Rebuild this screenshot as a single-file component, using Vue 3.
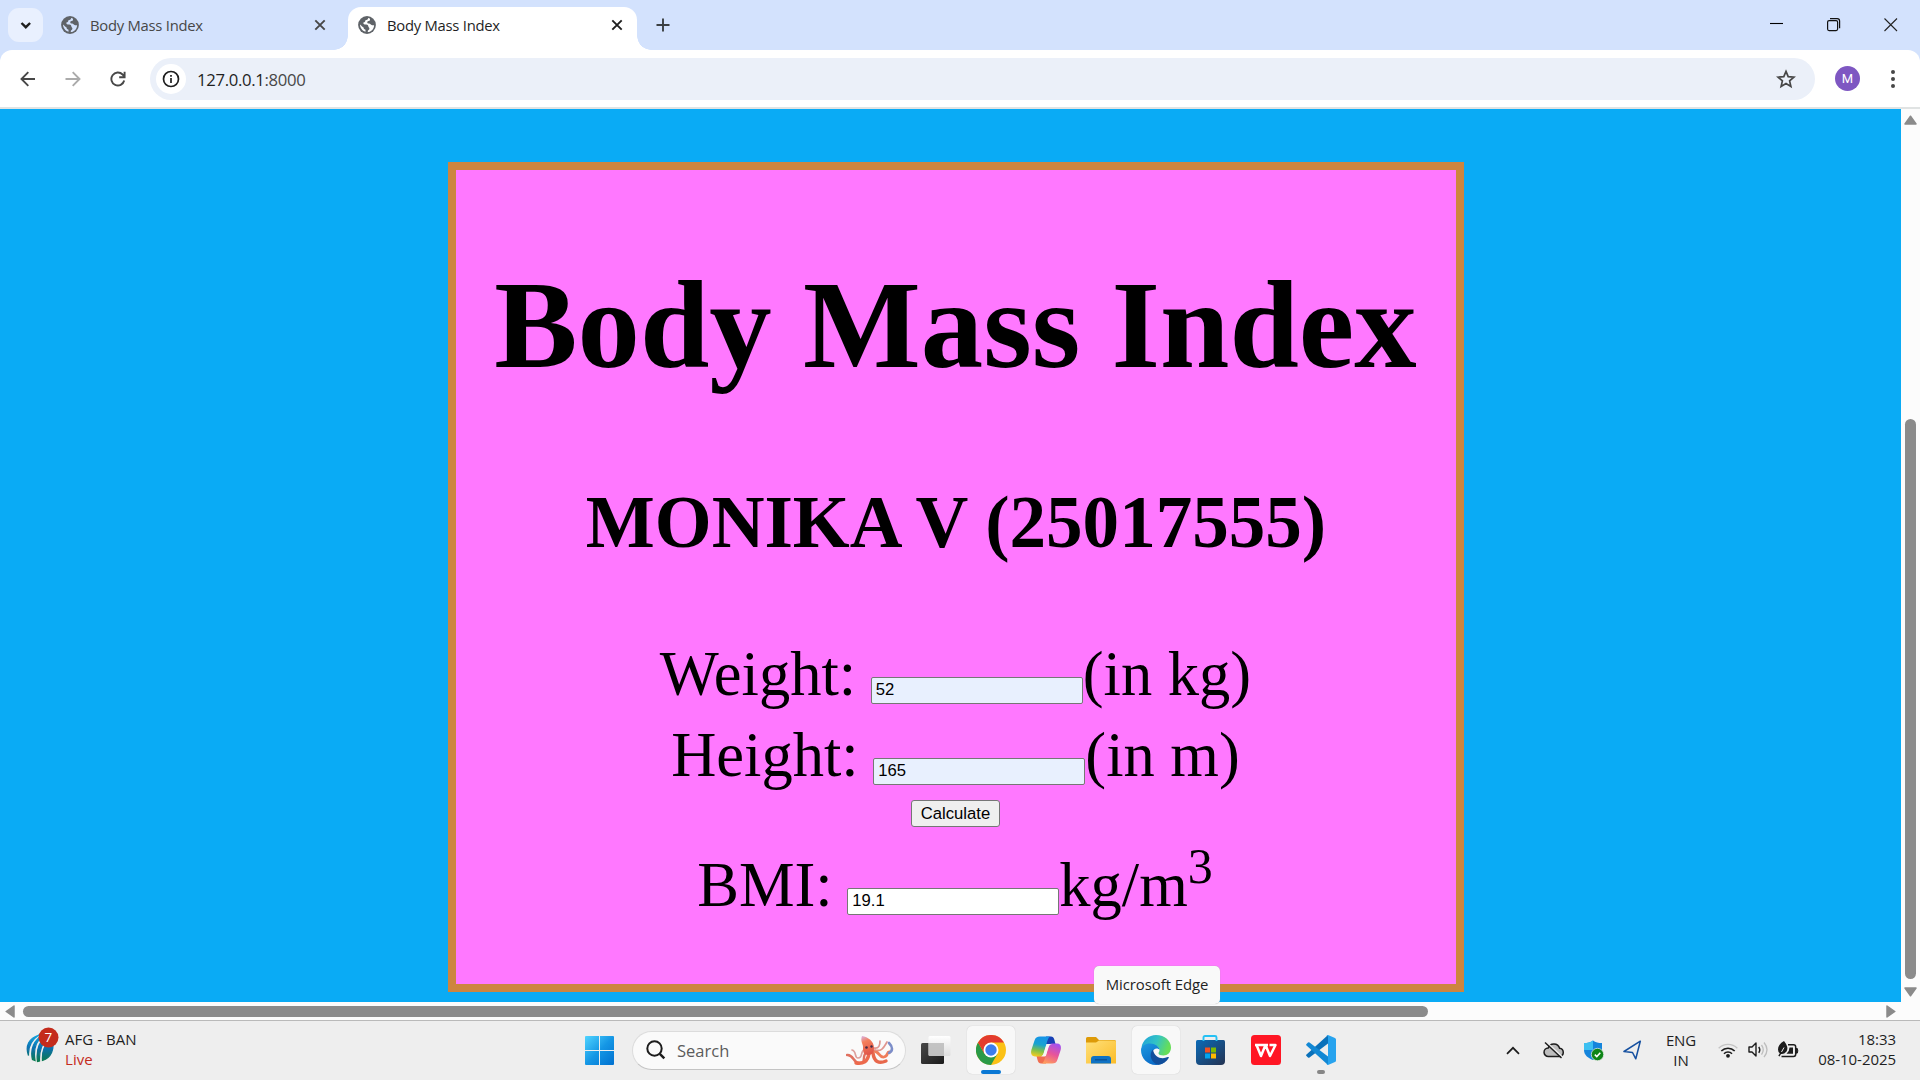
<script setup>
import { ref } from 'vue'

const tabs = [
  { title: 'Body Mass Index', active: false },
  { title: 'Body Mass Index', active: true },
]
const weight = ref('52')
const height = ref('165')
const bmi = ref('19.1')
</script>

<template>
  <div class="screen">
    <header class="tabstrip">
      <div class="tab-search">
        <svg width="35" height="34" viewBox="0 0 35 34"><path d="M13.500 15l4.300 4.200 4.300-4.200" fill="none" stroke="#1f1f1f" stroke-width="2.400" /></svg>
      </div>
      <div v-for="(t, i) in tabs" :key="i" class="tab" :class="{ active: t.active }">
        <svg class="globe" width="18" height="18" viewBox="0 0 18 18">
          <circle cx="9" cy="9" r="8.9" fill="#5f6368" />
          <path d="M10.2 2.1C9.9 3.6 8.8 4.2 7.4 4.3c-.2 1.300-.5 2.100-2 2.300-.2 1 .1 1.800 1.500 1.900 1.900.1 3.300.1 3.400 1.700.1 1.300 1.200 1.200 1.100 2.500-.1 1.300-1.500 1.200-1.600 2.300v1.100c3.500-.4 6.300-3.300 6.300-6.900h-2c-1.500 0-1.700-1.500-3-1.600-1.200-.1-2-.6-1.800-1.700.2-1.200 2.300-.5 2.700-1.700.2-.7 0-1.500-.5-2z" :fill="t.active ? '#fff' : '#d3e2fd'" />
          <path d="M2 8.600c.1 3.500 2.300 6.300 5.500 7.100v-2c-1.400-.2-1.900-1-1.900-2.100C4.600 11 3.200 9.700 2 8.600z" :fill="t.active ? '#fff' : '#d3e2fd'" />
        </svg>
        <span class="tab-title">{{ t.title }}</span>
        <svg class="tab-close" width="12" height="12" viewBox="0 0 12 12"><path d="M1.300 1.300l9.400 9.400M10.700 1.300l-9.400 9.400" stroke-width="1.900" stroke="currentColor" /></svg>
      </div>
      <svg class="plus" width="14" height="14" viewBox="0 0 14 14"><path d="M7 .5v13M.5 7h13" stroke="#3c4043" stroke-width="1.900" /></svg>
      <div class="win">
        <svg width="14" height="14" viewBox="0 0 14 14"><path d="M0 5.500h13" stroke="#000" stroke-width="1.100" /></svg>
        <svg width="14" height="14" viewBox="0 0 14 14"><rect x=".6" y="2.600" width="10" height="10" rx="1.500" fill="none" stroke="#111" stroke-width="1.200" /><path d="M3 .6h7.200q2.400 0 2.400 2.400v7.200" fill="none" stroke="#111" stroke-width="1.200" /></svg>
        <svg width="14" height="14" viewBox="0 0 14 14"><path d="M.5.5l12.500 12.500M13 .5L.5 13" stroke="#222" stroke-width="1.100" /></svg>
      </div>
    </header>

    <nav class="toolbar">
      <svg class="nav-ic" width="16" height="16" viewBox="0 0 16 16"><path d="M15 8H2M8.300 1.200L1.500 8l6.800 6.800" fill="none" stroke="#474747" stroke-width="1.900" /></svg>
      <svg class="nav-ic fwd" width="16" height="16" viewBox="0 0 16 16"><path d="M.5 8H14M7.700 1.200L14.500 8l-6.800 6.800" fill="none" stroke="#ababab" stroke-width="1.900" /></svg>
      <svg class="nav-ic rel" width="16" height="16" viewBox="0 0 16 16"><path d="M14.200 9.500A6.500 6.500 0 1 1 12.600 3.500l1.900 2M14.600.8v5.400H9.200" fill="none" stroke="#474747" stroke-width="1.900" /></svg>
      <div class="omnibox">
        <span class="info"><svg width="18" height="18" viewBox="0 0 18 18"><circle cx="9" cy="9" r="7.500" fill="none" stroke="#1f1f1f" stroke-width="1.700" /><path d="M9 8v5M9 5v1.700" stroke="#1f1f1f" stroke-width="1.700" /></svg></span>
        <span class="url">127.0.0.1<span>:8000</span></span>
        <svg class="star" width="20" height="20" viewBox="0 0 20 20"><path d="M10 2.400l2.200 5.300 5.700.5-4.300 3.700 1.300 5.500L10 14.500l-4.900 2.900 1.300-5.500L2.100 8.200l5.700-.5z" fill="none" stroke="#474747" stroke-width="1.700" /></svg>
      </div>
      <span class="avatar">M</span>
      <span class="dots"><i /><i /><i /></span>
    </nav>

    <div class="viewport">
      <main class="page">
        <section class="card">
          <h1>Body Mass Index</h1>
          <h3>MONIKA V (25017555)</h3>
          <form @submit.prevent>
            <div class="row">Weight: <input v-model="weight" class="filled">(in kg)</div>
            <div class="row">Height: <input v-model="height" class="filled">(in m)</div>
            <div class="row btn-row"><button>Calculate</button></div>
            <div class="row last">BMI: <input v-model="bmi">kg/m<sup>3</sup></div>
          </form>
        </section>
      </main>
      <div class="vbar">
        <svg width="13" height="10" viewBox="0 0 13 10"><path d="M6.500 1.200L12 9H1z" fill="#8b8b8b" stroke="#8b8b8b" stroke-width="1.500" stroke-linejoin="round" /></svg>
        <i class="vthumb" />
        <svg width="13" height="10" viewBox="0 0 13 10"><path d="M6.500 8.800L12 1H1z" fill="#8b8b8b" stroke="#8b8b8b" stroke-width="1.500" stroke-linejoin="round" /></svg>
      </div>
    </div>
    <div class="hbar">
      <svg width="10" height="13" viewBox="0 0 10 13"><path d="M1.200 6.500L9 1v11z" fill="#8b8b8b" stroke="#8b8b8b" stroke-width="1.500" stroke-linejoin="round" /></svg>
      <i class="hthumb" />
      <svg class="hr" width="10" height="13" viewBox="0 0 10 13"><path d="M8.800 6.500L1 1v11z" fill="#8b8b8b" stroke="#8b8b8b" stroke-width="1.500" stroke-linejoin="round" /></svg>
    </div>

    <footer class="taskbar">
      <div class="widget">
        <svg width="34" height="38" viewBox="0 0 34 38">
          <defs><linearGradient id="icc" x1="0" y1="0" x2="0" y2="1"><stop offset="0" stop-color="#12a5df" /><stop offset=".5" stop-color="#0b6fae" /><stop offset="1" stop-color="#0a7a4c" /></linearGradient></defs>
          <path d="M13 8C3 11-1 19 2.500 28.500 2 20 5 13 13 8zM17 8C8 13 4 22 6.500 32.500l2.500 1C7 22 10 14 17 8zM20 9c-7 6-10 14-8.500 25.500l2-.5C13 24 16 16 22 10zM26 12c-8 6-10 12-9.500 21.500C25 31 29 22 26 12z" fill="url(#icc)" stroke="url(#icc)" stroke-width="1.300" />
          <circle cx="22.500" cy="10.500" r="10" fill="#c42b1c" />
          <text x="22.300" y="15.300" text-anchor="middle" font-size="13.500" fill="#fff">7</text>
        </svg>
        <div class="wtext"><span>AFG - BAN</span><span class="live">Live</span></div>
      </div>

      <div class="apps">
        <svg class="win-logo" width="29" height="29" viewBox="0 0 29 29">
          <defs><linearGradient id="wl" x1="0" y1="0" x2="1" y2="1"><stop offset="0" stop-color="#50d4ff" /><stop offset=".5" stop-color="#1597e5" /><stop offset="1" stop-color="#0070cf" /></linearGradient></defs>
          <path d="M1 0h13v14H0V1q0-1 1-1zM15 0h13q1 0 1 1v13H15zM0 15h14v14H1q-1 0-1-1zM15 15h14v13q0 1-1 1H15z" fill="url(#wl)" />
        </svg>
        <div class="search">
          <svg width="20" height="20" viewBox="0 0 20 20"><circle cx="8.500" cy="8.500" r="7.200" fill="none" stroke="#1c1c1c" stroke-width="2" /><path d="M13.800 13.800l4.500 4.500" stroke="#1c1c1c" stroke-width="2.500" /></svg>
          <span>Search</span>
          <svg class="octo" width="48" height="31" viewBox="0 0 48 31">
            <defs><linearGradient id="oc" x1="0" y1="0" x2=".3" y2="1"><stop offset="0" stop-color="#d7b5ea" /><stop offset=".35" stop-color="#f4805c" /><stop offset="1" stop-color="#e2584a" /></linearGradient></defs>
            <g fill="none" stroke-linecap="round">
              <path d="M21 17C15 20 21 28 14 28 7 29 8 19 1 20" stroke="#e0705f" stroke-width="2.400" />
              <path d="M20 14c-7 1-2 9-8 9-4 0-1-7-6-8" stroke="#dda09c" stroke-width="1.700" />
              <path d="M23 18c-1 9-6 11-13 10" stroke="#ed6a4d" stroke-width="3.400" />
              <path d="M27 18c1 9 6 11 13 8" stroke="#e8684c" stroke-width="3.400" />
              <path d="M28 16c5 0 5 7 10 6s2-6 6-5" stroke="#f07d5a" stroke-width="2.800" />
              <path d="M28 13c5 1 6-3 6-7M29 15c7 2 9-3 12-8" stroke="#e0968f" stroke-width="1.700" />
              <path d="M43 8c4 4 4 8 0 10" stroke="#7c8ec9" stroke-width="2.600" />
            </g>
            <path d="M16 1c6 1 12 5 12 12 0 6-3 7-6 7-5 0-5-4-5-8 0-3-3-6-1-11z" fill="url(#oc)" />
            <circle cx="20.500" cy="12.500" r="1.300" fill="#432b48" /><circle cx="25.500" cy="11.500" r="1.200" fill="#432b48" />
          </svg>
        </div>
        <div class="slot s0"><svg width="30" height="30" viewBox="0 0 30 30">
          <defs><linearGradient id="tv" x1="0" y1="0" x2="1" y2="1"><stop offset="0" stop-color="#484848" /><stop offset="1" stop-color="#1b1b1b" /></linearGradient><linearGradient id="tw" x1="0" y1="0" x2="0" y2="1"><stop offset="0" stop-color="#fff" /><stop offset="1" stop-color="#dedede" /></linearGradient></defs>
          <rect x="0" y="8" width="23" height="21" rx="1.500" fill="url(#tv)" /><rect x="7.500" y="1" width="22" height="20" rx="1.500" fill="url(#tw)" /><path d="M7.500 8H23v13H9q-1.500 0-1.500-1.500z" fill="#b8b8b8" opacity=".8" />
        </svg></div>
        <div class="slot hot"><svg width="30" height="30" viewBox="0 0 30 30">
          <circle cx="15" cy="15" r="15" fill="#fbc116" />
          <path d="M2 7.500A15 15 0 0 0 15 30l6.500-11.300L15 15 8.500 18.700z" fill="#2a9a47" />
          <path d="M2 7.500A15 15 0 0 1 28 7.500H15L8.500 18.700z" fill="#e33b2e" />
          <circle cx="15" cy="15" r="7.500" fill="#fff" /><circle cx="15" cy="15" r="5.700" fill="#3b7ded" />
        </svg><i class="run" /></div>
        <div class="slot"><svg width="30" height="28" viewBox="0 0 30 28">
          <defs>
            <linearGradient id="c1" x1=".5" y1="0" x2=".3" y2="1"><stop offset="0" stop-color="#1593e8" /><stop offset=".4" stop-color="#17a3d0" /><stop offset=".7" stop-color="#7cc04c" /><stop offset="1" stop-color="#f5cb20" /></linearGradient>
            <linearGradient id="c2" x1=".7" y1="0" x2=".3" y2="1"><stop offset="0" stop-color="#a350ee" /><stop offset=".5" stop-color="#e85599" /><stop offset="1" stop-color="#ff9c5b" /></linearGradient>
          </defs>
          <path d="M15 .5h5q2.500 0 3.300 3L24.500 8H15z" fill="#1740b5" /><path d="M15 27.500h-5q-2.500 0-3.300-3L5.500 20H15z" fill="#f06d50" />
          <path d="M9 .5h11c-2 0-3 2-4 5.500l-3 10c-1 3.500-2 4.500-4.500 4.500H4C0 20.500-.5 17 .5 13.500l3-9C4.500 1.500 6 .5 9 .5z" fill="url(#c1)" />
          <path d="M21 27.500H10c2 0 3-2 4-5.500l3-10c1-3.500 2-4.500 4.500-4.500H26c4 0 4.500 3.500 3.500 7l-3 9c-1 3-2.500 4-5.500 4z" fill="url(#c2)" />
          <path d="M17 8h4c-2.500.5-3 2-4 5l-2 6.500q-.5 1-1.500 1H9.500c2.500-.5 3-2 3.800-5l2-6q.5-1.500 1.700-1.500z" fill="#f7f5f3" />
        </svg></div>
        <div class="slot"><svg width="30" height="27" viewBox="0 0 30 27">
          <defs><linearGradient id="fo" x1="0" y1="0" x2="1" y2="1"><stop offset="0" stop-color="#ffe07a" /><stop offset="1" stop-color="#fbbc28" /></linearGradient></defs>
          <path d="M0 1.500Q0 0 1.500 0H10l3 3h15.500Q30 3 30 4.500V8H0z" fill="#dd9a08" /><path d="M0 5.500h10L13 3.500h15.500Q30 3.500 30 5V26.500H0z" fill="url(#fo)" /><path d="M5 26.500V22q0-3 3-3h14q3 0 3 3v4.500z" fill="#0f72c4" /><path d="M9 22.800h12" stroke="#0a4f93" stroke-width="1.300" />
        </svg></div>
        <div class="slot hot"><svg width="30" height="30" viewBox="0 0 30 30">
          <defs><linearGradient id="e1" x1="0" y1="0" x2="1" y2=".3"><stop offset="0" stop-color="#1da0dc" /><stop offset=".55" stop-color="#33c3c5" /><stop offset="1" stop-color="#66de58" /></linearGradient><linearGradient id="e2" x1="0" y1="0" x2=".6" y2="1"><stop offset="0" stop-color="#1d9ae0" /><stop offset="1" stop-color="#0968c6" /></linearGradient></defs>
          <path d="M.5 12.500C1.500 5 8 0 15 0c9 0 15 6 15 12.500 0 5-3.500 8-7.500 8-3 0-5-1-5-2.300 0-.9 1-1.400 1-3.200 0-2.500-3-5-7-5-5 0-8 1-11 2.500z" fill="url(#e1)" />
          <path d="M0 15C0 11 4.500 8.500 9 8.500c5 0 9.500 3 9.500 6.500-1-2-6-2.500-7 2.500-1 6 5 12 12.500 9.500C21.500 29 18 30 15 30 6 30 0 23 0 15z" fill="url(#e2)" />
          <path d="M12 14.500c-5 5-1.500 14 5.500 15.300 4.500-.6 8.200-3.300 10.200-6.800.4-.8-.2-1.200-.9-.9-6 2.600-13.800.5-14.800-7.600z" fill="#114f9c" />
        </svg></div>
        <div class="slot"><svg class="store" width="30" height="30" viewBox="0 0 30 30">
          <defs><linearGradient id="st" x1="0" y1="0" x2="1" y2="1"><stop offset="0" stop-color="#0b6bb8" /><stop offset="1" stop-color="#243251" /></linearGradient></defs>
          <path d="M1 6.500q0-1.500 1.500-1.500h26Q30 5 30 6.500V26q0 4-4 4H5q-4 0-4-4z" fill="url(#st)" /><path d="M8.500 6V2.500Q8.500 1 10 1h10q1.500 0 1.500 1.500V6" fill="none" stroke="#25c1f4" stroke-width="1.900" />
          <path d="M10 12.500h5v5h-5z" fill="#f25022" /><path d="M16 12.500h5v5h-5z" fill="#7fba00" /><path d="M10 18.500h5v5h-5z" fill="#00a4ef" /><path d="M16 18.500h5v5h-5z" fill="#ffb900" />
        </svg></div>
        <div class="slot"><svg width="30" height="30" viewBox="0 0 30 30"><rect width="30" height="30" rx="3.500" fill="#ff1624" /><path d="M4 10h13M5.500 10l4.500 11 4.500-11 4.500 11L24.500 10h-6" fill="none" stroke="#fff" stroke-width="2.500" stroke-linejoin="round" /></svg></div>
        <div class="slot"><svg width="30" height="30" viewBox="0 0 30 30">
          <path d="M22 0v8.500L3.500 22.500q-.8.500-1.500 0L.5 21q-.8-.8 0-1.500z" fill="#0a71ba" /><path d="M22 30v-8.500L3.500 7.500Q2.800 7 2 7.500L.5 9q-.8.800 0 1.500z" fill="#1288d4" /><path d="M22 0l7 3q1 .5 1 1.500v21q0 1-1 1.500l-7 3q-.8 0-1.500-1 1.500.5 1.500-1V2q0-1.500-1.500-1 .7-1 1.500-1z" fill="#27a3ee" />
        </svg><i class="run idle" /></div>
      </div>

      <div class="tray">
        <svg class="t1" width="14" height="9" viewBox="0 0 14 9"><path d="M1 7.800l6-6 6 6" fill="none" stroke="#1c1c1c" stroke-width="1.700" /></svg>
        <svg class="t2" width="22" height="18" viewBox="0 0 22 18"><path d="M5.500 15.500a4.300 4.300 0 0 1-.3-8.600 6 6 0 0 1 11.400.3 4.200 4.200 0 0 1 .2 8.300z" fill="#bdbdbd" stroke="#1c1c1c" stroke-width="1.500" /><path d="M3.500 1l16 15" stroke="#eee" stroke-width="1.500" /><path d="M2 1.500l16.500 15.500" stroke="#1c1c1c" stroke-width="1.400" /></svg>
        <svg class="t3" width="20" height="21" viewBox="0 0 20 21"><path d="M9 .5c2.500 2 5.500 2.500 9 2.500v7c0 5-4 8-9 10-5-2-9-5-9-10V3c3.500 0 6.500-.5 9-2.500z" fill="#1585dc" /><path d="M9 .5V10H0V3c3.500 0 6.500-.5 9-2.500z" fill="#3cc0f1" /><circle cx="13.500" cy="14.500" r="6.200" fill="#0e8517" stroke="#eee" stroke-width=".7" /><path d="M10.800 14.600l2 2 3.500-3.800" fill="none" stroke="#fff" stroke-width="1.500" /></svg>
        <svg class="t4" width="19" height="20" viewBox="0 0 19 20"><path d="M17.300 1.200L1 11.500l8.500 1 3.300 6.300z" fill="none" stroke="#1550a0" stroke-width="1.500" stroke-linejoin="round" /></svg>
        <div class="lang"><span>ENG</span><span>IN</span></div>
        <svg class="t5" width="20" height="15" viewBox="0 0 20 15"><g fill="none" stroke-width="1.400"><path d="M.7 5.300a13 13 0 0 1 18.600 0" stroke="#c4c4c4" /><path d="M3.300 8a9.500 9.500 0 0 1 13.400 0M6 10.700a5.600 5.600 0 0 1 8 0" stroke="#1c1c1c" stroke-width="1.600" /></g><circle cx="10" cy="12.800" r="1.900" fill="#1c1c1c" /></svg>
        <svg class="t6" width="21" height="18" viewBox="0 0 21 18"><path d="M1 6h3l4-4v13l-4-4H1z" fill="none" stroke="#1c1c1c" stroke-width="1.400" stroke-linejoin="round" /><path d="M10.800 5.800q2 3 0 6" fill="none" stroke="#1c1c1c" stroke-width="1.400" /><path d="M13.500 4q3.500 4.800 0 9.600M16 1.500q6 7.200 0 14.600" fill="none" stroke="#bdbdbd" stroke-width="1.300" /></svg>
        <svg class="t7" width="21" height="18" viewBox="0 0 21 18"><path d="M10 3.800h5.500q2.200 0 2.200 2.200v7.300q0 2.200-2.200 2.200H3.500" fill="none" stroke="#1c1c1c" stroke-width="1.500" /><path d="M18 7.500h1.300q1 2.300 0 4.600H18z" fill="#1c1c1c" stroke="#1c1c1c" /><path d="M11.500 6.500H15v6.300H8.500q3-2.500 3-6.300z" fill="#1c1c1c" /><path d="M0 8.500Q0 3.500 6 0c3 4 4.500 7 2.500 10.500Q6 13.500 3 13L1.500 15.500.3 14.700l1.500-2.500Q0 11 0 8.500z" fill="#1c1c1c" /><path d="M3.500 11L6 6.500" fill="none" stroke="#eee" stroke-width="1" /></svg>
        <div class="clock"><span>18:33</span><span>08-10-2025</span></div>
      </div>
    </footer>
    <div class="tooltip">Microsoft Edge</div>
  </div>
</template>

<style>
body { margin: 0; overflow: hidden; }
</style>

<style scoped>
* { box-sizing: border-box; }
svg { display: block; flex: none; }
.screen { width: 1920px; height: 1080px; position: relative; display: flex; flex-direction: column; overflow: hidden; background: #fff; font-family: "Open Sans", "Noto Sans", sans-serif; color: #1f1f1f; }
.tabstrip { height: 62px; margin-bottom: -12px; background: #d3e2fd; display: flex; align-items: flex-start; }
.tab-search { width: 35px; height: 34px; margin: 8px 0 0 8px; border-radius: 11px; background: #e9f0fe; }
.tab { width: 289px; height: 43px; margin-top: 7px; padding: 0 14px 0 10px; display: flex; align-items: center; font-size: 14.8px; color: #474747; }
.tab:nth-child(2) { margin-left: 8px; }
.tab.active { background: #fff; color: #1f1f1f; border-radius: 13px 13px 0 0; margin-left: 8px; position: relative; }
.tab.active::before, .tab.active::after { content: ""; position: absolute; bottom: 0; width: 14px; height: 14px; }
.tab.active::before { left: -14px; background: radial-gradient(circle at 0 0, transparent 13.5px, #fff 14px); }
.tab.active::after { right: -14px; background: radial-gradient(circle at 100% 0, transparent 13.5px, #fff 14px); }
.globe { margin-top: -7px; }
.tab-title { margin: -7px 0 0 11px; letter-spacing: -.25px; }
.tab-close { margin: -7px 0 0 auto; }
.plus { margin: 18px 0 0 19px; }
.win { margin: 18px 22px 0 auto; display: flex; gap: 43px; }
.toolbar { height: 59px; background: #fff; border-bottom: 2px solid #e0e3e3; border-radius: 12px 12px 0 0; display: flex; align-items: center; padding-left: 20px; position: relative; }
.nav-ic.fwd { margin-left: 29px; }
.nav-ic.rel { margin-left: 29px; }
.omnibox { width: 1665px; height: 42px; border-radius: 21px; background: #ebf0f9; margin-left: 24px; display: flex; align-items: center; padding: 0 19px 0 6px; }
.info { width: 30px; height: 30px; border-radius: 50%; background: #fff; display: grid; place-items: center; }
.url { margin: 1px 0 0 11px; font-size: 16.7px; letter-spacing: -.33px; color: #1f1f1f; }
.url span { color: #474747; }
.star { margin-left: auto; }
.avatar { width: 25px; height: 25px; margin-left: 20px; border-radius: 50%; background: #7e57c2; color: #fff; font: 13px/25px Roboto, sans-serif; text-align: center; }
.dots { margin-left: 31px; display: flex; flex-direction: column; gap: 3px; }
.dots i { width: 4px; height: 4px; border-radius: 50%; background: #474747; }
.viewport { height: 893px; display: flex; }
.page { width: 1901px; background: #0aabf5; padding: 53px 0 0 448px; }
.card { width: 1016px; height: 830px; border: 8px solid #cd853f; background: #ff78ff; color: #000; text-align: center; font-family: "Liberation Serif", serif; font-size: 62.5px; overflow: hidden; white-space: nowrap; }
h1 { margin: 83px 0 0; font-size: 124.8px; line-height: 144px; padding-right: 1px; }
h3 { margin: 84px 0 0; font-size: 73.1px; line-height: 84px; }
form { margin-top: 73px; }
.row { height: 81px; line-height: 72px; padding-right: 1px; }
.btn-row { height: 50px; line-height: 44px; display: flex; justify-content: center; padding-right: 1px; }
.last { height: 90px; margin-top: -1px; padding-right: 2px; }
input { width: 212px; height: 27px; border: 1px solid #767676; border-radius: 2px; padding: 1px 4px; font: 16.67px "Liberation Sans", sans-serif; background: #fff; color: #000; margin: 0 0 0 -1px; }
input.filled { background: #e8f0fe; }
button { width: 89px; height: 27px; padding: 0; border: 1px solid #767676; border-radius: 3px; background: #efefef; color: #000; font: 16.67px "Liberation Sans", sans-serif; }
sup { font-size: 50px; line-height: 0; position: relative; top: -1px; }
.vbar { width: 19px; background: #fcfcfc; display: flex; flex-direction: column; align-items: center; padding: 6px 0 0; }
.vthumb { width: 11px; height: 560px; margin: 294px 0 8px; border-radius: 6px; background: #8b8b8b; }
.hbar { height: 18px; background: #fcfcfc; display: flex; align-items: center; padding: 1px 24px 0 5px; }
.hthumb { width: 1405px; height: 11px; margin-left: 8px; border-radius: 6px; background: #8b8b8b; }
.hr { margin-left: auto; }
.taskbar { height: 60px; background: #eee; border-top: 1px solid #b9b9b9; position: relative; display: flex; font-size: 15px; line-height: 20px; }
.widget { width: 560px; display: flex; padding: 6px 0 0 26px; }
.wtext { margin: 2px 0 0 5px; display: flex; flex-direction: column; letter-spacing: .05px; }
.live { color: #c42b1c; }
.apps { display: flex; align-items: center; width: 800px; height: 58px; }
.win-logo { margin-left: 25px; }
.search { width: 274px; height: 39px; margin-left: 18px; border: 1px solid #dcdcdc; border-bottom-color: #c4c4c4; border-radius: 20px; background: #fafafa; display: flex; align-items: center; padding: 0 11px 0 13px; font-size: 16.5px; color: #5c5c5c; }
.search span { margin: 2px 0 0 11px; }
.octo { margin-left: auto; }
.slot { width: 48px; height: 48px; margin-left: 7px; border-radius: 5px; display: grid; place-items: center; position: relative; }
.s0 { margin-left: 6px; }
.store { margin-right: 2px; }
.hot { background: #f8f8f8; box-shadow: 0 0 1px #bbb; }
.run { position: absolute; bottom: 0; left: 14px; width: 20px; height: 4px; border-radius: 2px; background: #0a78d4; }
.run.idle { left: 20px; width: 8px; background: #868686; }
.tray { position: relative; flex: 1; height: 58px; display: flex; align-items: center; }
.t1 { margin-left: 146px; }
.t2 { margin-left: 23px; }
.t3 { margin-left: 19px; }
.t4 { margin-left: 19px; }
.lang { width: 44px; margin-left: 17px; display: flex; flex-direction: column; align-items: center; letter-spacing: -.1px; }
.t5 { margin-left: 15px; }
.t6 { margin-left: 10px; }
.t7 { margin-left: 9px; }
.clock { margin: 0 24px 2px auto; display: flex; flex-direction: column; align-items: flex-end; letter-spacing: -.05px; }
.tooltip { position: absolute; left: 1094px; top: 966px; width: 126px; height: 38px; border-radius: 5px; background: #f9f9f9; box-shadow: 0 0 1px #999; font-size: 14.9px; letter-spacing: -.05px; line-height: 37px; text-align: center; }
</style>
